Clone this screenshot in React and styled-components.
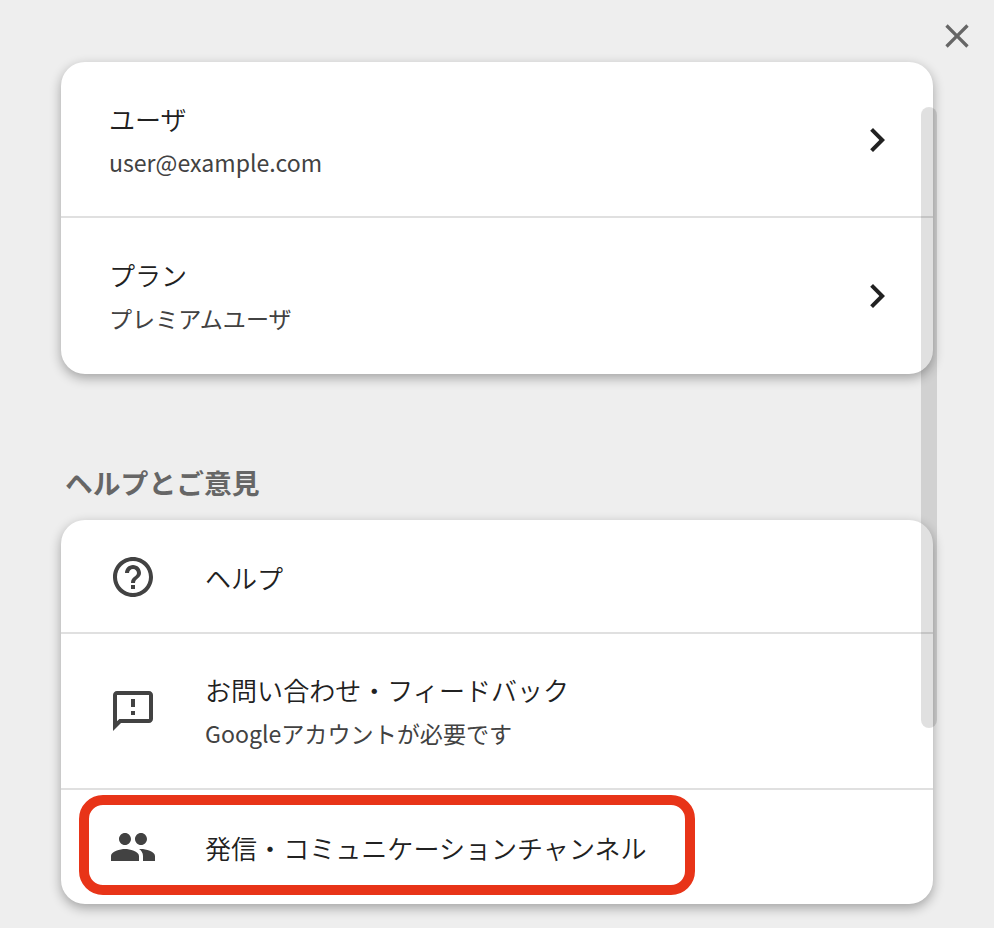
import styled, { createGlobalStyle } from "styled-components";

const GlobalStyle = createGlobalStyle`
  html, body {
    margin: 0;
    padding: 0;
    height: 928px;
    overflow: hidden;
    background: #eeeeee;
    font-family: "Noto Sans CJK JP", "Noto Sans", sans-serif;
  }
`;

const Page = styled.div`
  position: relative;
  width: 994px;
  height: 928px;
  padding: 0 61px;
  box-sizing: border-box;
`;

const Header = styled.div`
  height: 62px;
  margin-right: -44px;
  display: flex;
  justify-content: flex-end;
  align-items: flex-start;
  padding-top: 16px;
  box-sizing: border-box;
`;

const Card = styled.div`
  background: #fff;
  border-radius: 24px;
  box-shadow: 0 4px 12px rgba(0, 0, 0, 0.32);
`;

const Row = styled.div`
  position: relative;
  display: flex;
  align-items: center;
  box-sizing: border-box;
  height: ${(p) => p.$height}px;
  padding: 0 32px 0 48px;
  &:first-child {
    padding-top: 2px;
  }
  & + & {
    border-top: 2px solid #e0e0e0;
  }
`;

const Texts = styled.div`
  flex: 1;
  min-width: 0;
`;

const Title = styled.div`
  font-size: 26.05px;
  font-weight: 350;
  padding-top: 2px;
  line-height: 42px;
  color: #212121;
`;

const Sub = styled.div`
  font-size: 23.1px;
  line-height: 44px;
  color: #424242;
`;

const IconBox = styled.div`
  width: 48px;
  height: 48px;
  margin-right: 48px;
  flex: none;
  color: #424242;
  svg {
    display: block;
    fill: currentColor;
  }
`;

const Chevron = styled.svg`
  flex: none;
  fill: #212121;
`;

const CloseIcon = styled.svg`
  fill: #666666;
`;

const SectionTitle = styled.h2`
  margin: 86px 0 0 4px;
  height: 60px;
  font-size: 27.8px;
  font-weight: 700;
  line-height: 44px;
  color: #666666;
`;

const Scrollbar = styled.div`
  position: absolute;
  left: 921px;
  top: 107px;
  width: 16px;
  height: 621px;
  border-radius: 8px;
  background: rgba(0, 0, 0, 0.12);
`;

const Highlight = styled.div`
  position: absolute;
  left: 18px;
  top: 5px;
  width: 616px;
  height: 100px;
  box-sizing: border-box;
  border: 10px solid #e83418;
  border-radius: 24px;
`;

const ICON = {
  close:
    "M19 6.41L17.59 5 12 10.59 6.41 5 5 6.41 10.59 12 5 17.59 6.41 19 12 13.41 17.59 19 19 17.59 13.41 12z",
  chevron: "M10 6L8.59 7.41 13.17 12l-4.58 4.59L10 18l6-6z",
  help: "M11 18h2v-2h-2v2zm1-16C6.48 2 2 6.48 2 12s4.48 10 10 10 10-4.48 10-10S17.52 2 12 2zm0 18c-4.41 0-8-3.59-8-8s3.59-8 8-8 8 3.59 8 8-3.59 8-8 8zm0-14c-2.21 0-4 1.79-4 4h2c0-1.1.9-2 2-2s2 .9 2 2c0 2-3 1.75-3 5h2c0-2.25 3-2.5 3-5 0-2.21-1.79-4-4-4z",
  feedback:
    "M20 2H4c-1.1 0-1.99.9-1.99 2L2 22l4-4h14c1.1 0 2-.9 2-2V4c0-1.1-.9-2-2-2zm0 14H5.17L4 17.17V4h16v12zm-9-4h2v2h-2zm0-6h2v4h-2z",
  people:
    "M16 11c1.66 0 2.99-1.34 2.99-3S17.66 5 16 5c-1.66 0-3 1.34-3 3s1.34 3 3 3zm-8 0c1.66 0 2.99-1.34 2.99-3S9.66 5 8 5C6.34 5 5 6.34 5 8s1.34 3 3 3zm0 2c-2.33 0-7 1.17-7 3.5V19h14v-2.5c0-2.33-4.67-3.5-7-3.5zm8 0c-.29 0-.62.02-.97.05 1.16.84 1.97 1.97 1.97 3.45V19h6v-2.5c0-2.33-4.67-3.5-7-3.5z",
};

function Icon({ name }) {
  return (
    <IconBox>
      <svg width="48" height="48" viewBox="0 0 24 24">
        <path d={ICON[name]} />
      </svg>
    </IconBox>
  );
}

export default function App() {
  return (
    <Page>
      <GlobalStyle />
      <Header>
        <CloseIcon width="40" height="40" viewBox="0 0 24 24">
          <path d={ICON.close} />
        </CloseIcon>
      </Header>

      <Card>
        <Row $height={154}>
          <Texts>
            <Title>ユーザ</Title>
            <Sub>user@example.com</Sub>
          </Texts>
          <Chevron width="48" height="48" viewBox="0 0 24 24">
            <path d={ICON.chevron} />
          </Chevron>
        </Row>
        <Row $height={158}>
          <Texts>
            <Title>プラン</Title>
            <Sub>プレミアムユーザ</Sub>
          </Texts>
          <Chevron width="48" height="48" viewBox="0 0 24 24">
            <path d={ICON.chevron} />
          </Chevron>
        </Row>
      </Card>

      <SectionTitle>ヘルプとご意見</SectionTitle>

      <Card>
        <Row $height={112}>
          <Icon name="help" />
          <Title>ヘルプ</Title>
        </Row>
        <Row $height={156}>
          <Icon name="feedback" />
          <Texts>
            <Title>お問い合わせ・フィードバック</Title>
            <Sub>Googleアカウントが必要です</Sub>
          </Texts>
        </Row>
        <Row $height={116}>
          <Icon name="people" />
          <Title>発信・コミュニケーションチャンネル</Title>
          <Highlight />
        </Row>
      </Card>

      <Scrollbar />
    </Page>
  );
}
